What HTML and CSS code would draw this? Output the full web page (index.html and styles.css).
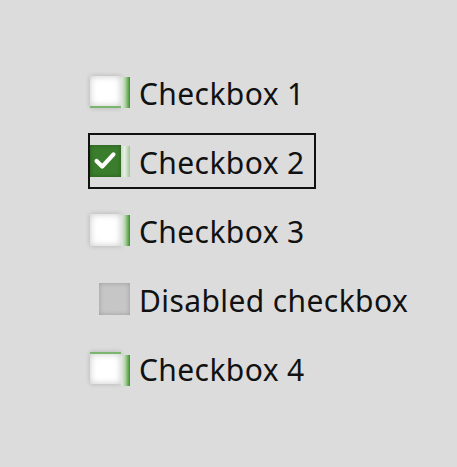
FILE: index.html
```html
<!DOCTYPE html>
<html lang="en">
<head>
  <meta charset="UTF-8" />
  <meta name="viewport" content="width=device-width, initial-scale=1.0"/>
  <title>Checkboxes</title>
  <link rel="stylesheet" href="styles.css">
</head>
<body>
  <div class="list">
    <label class="row">
      <span class="box edge-bottom"></span>
      <span class="label">Checkbox 1</span>
    </label>
    <label class="row focused">
      <span class="box checked">
        <svg viewBox="0 0 32 32" width="32" height="32">
          <path d="M7 17 L13 23 L25 10" fill="none" stroke="#fff" stroke-width="4.5" stroke-linecap="round" stroke-linejoin="round"/>
        </svg>
      </span>
      <span class="label">Checkbox 2</span>
    </label>
    <label class="row">
      <span class="box"></span>
      <span class="label">Checkbox 3</span>
    </label>
    <label class="row">
      <span class="box disabled"></span>
      <span class="label">Disabled checkbox</span>
    </label>
    <label class="row">
      <span class="box edge-top"></span>
      <span class="label">Checkbox 4</span>
    </label>
  </div>
</body>
</html>
```

FILE: styles.css
```css
body {
  margin: 0;
  background: #dcdcdc;
  font-family: 'Noto Sans', 'Open Sans', sans-serif;
  color: #111;
}

.list {
  display: flex;
  flex-direction: column;
  align-items: flex-start;
  gap: 13px;
  padding: 64px 0 0 88px;
}

.row {
  display: flex;
  align-items: center;
  gap: 9px;
  height: 52px;
  padding-right: 9px;
  border: 2px solid transparent;
}

.row.focused {
  border-color: #111;
}

.box {
  position: relative;
  width: 31px;
  height: 32px;
  margin-right: 9px;
  background: #fff;
  box-shadow: inset 0 0 7px rgba(0,0,0,0.22), 0 0 5px rgba(0,0,0,0.18);
}

/* right face of the 3d box */
.box::after {
  content: "";
  position: absolute;
  top: 1px;
  right: -9px;
  width: 9px;
  height: 31px;
  background: linear-gradient(to right, #e4ece2 0%, #b6d4ad 45%, #5aa34a 85%, #3d8a30 100%);
}

.box.edge-bottom {
  border-bottom: 2px solid #7cb56e;
  height: 30px;
}

.box.edge-top {
  border-top: 2px solid #7cb56e;
  height: 30px;
}

.box.checked {
  background: #3a7d2c;
  box-shadow: inset 0 0 4px rgba(0,0,0,0.3);
}

.box.checked svg {
  display: block;
  width: 30px;
  height: 30px;
}

.box.checked::after {
  background: linear-gradient(to right, #c8dcc2 0%, #e8efe6 40%, #b9d3b1 80%, #9cc490 100%);
}

.box.disabled {
  margin-left: 9px;
  margin-right: 0;
  background: #c6c6c6;
  box-shadow: inset 0 0 5px rgba(0,0,0,0.22);
}

.box.disabled::after {
  display: none;
}

.label {
  font-size: 30px;
  letter-spacing: 0.4px;
  line-height: 1;
  padding-top: 3px;
}
```
